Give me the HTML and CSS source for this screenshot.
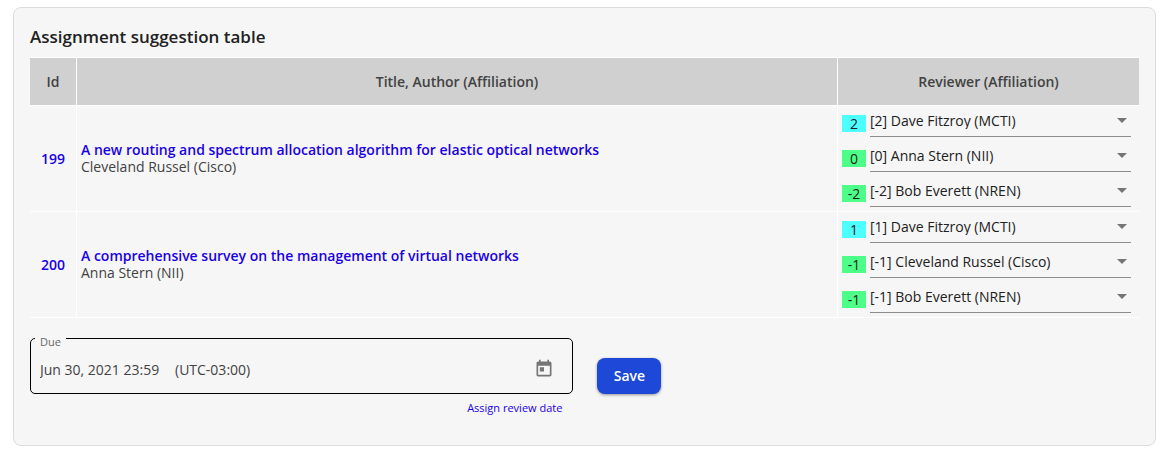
FILE: index.html
```html
<!DOCTYPE html>
<html lang="en">
<head>
<meta charset="utf-8">
<meta name="viewport" content="width=device-width, initial-scale=1">
<title>Assignment suggestion table</title>
<link rel="stylesheet" href="styles.css">
</head>
<body>
<main class="card">
  <h1 class="card-title">Assignment suggestion table</h1>
  <table class="suggestions">
    <thead>
      <tr>
        <th class="col-id" scope="col">Id</th>
        <th scope="col">Title, Author (Affiliation)</th>
        <th class="col-reviewer" scope="col">Reviewer (Affiliation)</th>
      </tr>
    </thead>
    <tbody>
      <tr>
        <td class="id-cell"><a class="link" href="#199">199</a></td>
        <td class="paper"><a class="link" href="#199">A new routing and spectrum allocation algorithm for elastic optical networks</a><div>Cleveland Russel (Cisco)</div></td>
        <td class="reviewers">
          <div class="reviewer"><span class="score score-high">2</span><span class="select-wrap"><select class="select" aria-label="Reviewer 1 of 199"><option>[2] Dave Fitzroy (MCTI)</option></select></span></div>
          <div class="reviewer"><span class="score score-low">0</span><span class="select-wrap"><select class="select" aria-label="Reviewer 2 of 199"><option>[0] Anna Stern (NII)</option></select></span></div>
          <div class="reviewer"><span class="score score-low">-2</span><span class="select-wrap"><select class="select" aria-label="Reviewer 3 of 199"><option>[-2] Bob Everett (NREN)</option></select></span></div>
        </td>
      </tr>
      <tr>
        <td class="id-cell"><a class="link" href="#200">200</a></td>
        <td class="paper"><a class="link" href="#200">A comprehensive survey on the management of virtual networks</a><div>Anna Stern (NII)</div></td>
        <td class="reviewers">
          <div class="reviewer"><span class="score score-high">1</span><span class="select-wrap"><select class="select" aria-label="Reviewer 1 of 200"><option>[1] Dave Fitzroy (MCTI)</option></select></span></div>
          <div class="reviewer"><span class="score score-low">-1</span><span class="select-wrap"><select class="select" aria-label="Reviewer 2 of 200"><option>[-1] Cleveland Russel (Cisco)</option></select></span></div>
          <div class="reviewer"><span class="score score-low">-1</span><span class="select-wrap"><select class="select" aria-label="Reviewer 3 of 200"><option>[-1] Bob Everett (NREN)</option></select></span></div>
        </td>
      </tr>
    </tbody>
  </table>
  <form class="due-form">
    <div class="due">
      <div class="field">
        <label class="field-label" for="due">Due</label>
        <div class="field-row">
          <input class="field-input" id="due" type="text" value="Jun 30, 2021 23:59">
          <span class="zone">(UTC-03:00)</span>
          <button class="calendar" type="button" aria-label="Open calendar">
            <svg width="20" height="20" viewBox="0 0 24 24" fill="currentColor" aria-hidden="true"><path d="M19 3h-1V1h-2v2H8V1H6v2H5c-1.11 0-1.99.9-1.99 2L3 19c0 1.1.89 2 2 2h14c1.1 0 2-.9 2-2V5c0-1.1-.9-2-2-2zm0 16H5V8h14v11zM7 10h5v5H7z"/></svg>
          </button>
        </div>
      </div>
      <a class="hint" href="#review-date">Assign review date</a>
    </div>
    <button class="save" type="button">Save</button>
  </form>
</main>
</body>
</html>
```

FILE: styles.css
```css
* {
  box-sizing: border-box;
}

body {
  margin: 7px 14px 0 13px;
  background: #fff;
  color: #424242;
  font: 14px/17px "Open Sans", "Noto Sans", sans-serif;
}

.card {
  padding: 17px 16px 29px;
  border: 1px solid #dcdcdc;
  border-radius: 8px;
  background: #f6f6f6;
}

.card-title {
  margin: 0 0 8px;
  color: #212121;
  font-size: 17px;
  font-weight: 600;
  line-height: 24px;
}

.suggestions {
  width: 100%;
  table-layout: fixed;
  border-spacing: 0;
}

.suggestions th,
.suggestions td {
  border-right: 1px solid #fff;
  border-bottom: 1px solid #fff;
}

.suggestions th:last-child,
.suggestions td:last-child {
  border-right: 0;
}

.suggestions th {
  height: 49px;
  padding: 0 4px;
  border-top: 1px solid #fff;
  background: #d0d0d0;
  font-weight: 600;
}

.suggestions .col-id {
  width: 47px;
}

.suggestions .col-reviewer {
  width: 301px;
}

.id-cell {
  padding: 0;
  text-align: center;
}

.paper {
  padding: 0 4px 2px;
}

.link {
  color: #1a00e8;
  font-weight: 600;
  text-decoration: none;
}

.reviewers {
  padding: 0 8px 0 4px;
}

.reviewer {
  display: flex;
  gap: 4px;
  height: 35px;
}

.score {
  flex: none;
  width: 24px;
  height: 17px;
  margin-top: 9px;
  color: #212121;
  text-align: center;
}

.score-high {
  background: #4dffff;
}

.score-low {
  background: #4dff88;
}

.select-wrap {
  position: relative;
  flex: 1;
  height: 31px;
}

.select-wrap::after {
  position: absolute;
  top: 12px;
  right: 4px;
  border: 5px solid transparent;
  border-top-color: #757575;
  border-bottom: 0;
  content: "";
  pointer-events: none;
}

.select {
  width: 100%;
  height: 31px;
  padding: 0 20px 2px 0;
  border: 0;
  border-bottom: 1px solid #8c8c8c;
  border-radius: 0;
  appearance: none;
  background: transparent;
  color: #212121;
  font: inherit;
}

.due-form {
  display: flex;
  align-items: flex-start;
  gap: 24px;
  margin-top: 20px;
}

.due {
  display: flex;
  flex-direction: column;
  width: 49%;
}

.field {
  height: 56px;
  padding-left: 4px;
  border: 1px solid #000;
  border-radius: 5px;
}

.field-label {
  display: block;
  width: 31px;
  height: 10px;
  margin-top: -1px;
  padding-left: 5px;
  background: #f6f6f6;
  color: #666;
  font-size: 11px;
  line-height: 8px;
}

.field-row {
  display: flex;
  align-items: center;
  height: 42px;
  padding: 0 18px 0 5px;
}

.field-input {
  width: 135px;
  padding: 0;
  border: 0;
  background: transparent;
  color: #424242;
  font: inherit;
}

.calendar {
  display: flex;
  margin-left: auto;
  padding: 0;
  border: 0;
  background: transparent;
  color: #757575;
}

.hint {
  align-self: flex-end;
  margin: 5px 11px 0 0;
  color: #1a00e8;
  font-size: 11px;
  line-height: 17px;
  text-decoration: none;
}

.save {
  min-width: 64px;
  height: 36px;
  margin-top: 20px;
  padding: 0 15px 2px;
  border: 0;
  border-radius: 8px;
  background: #1d48d8;
  box-shadow: 0 1px 3px rgb(0 0 0 / 40%);
  color: #fff;
  font: inherit;
  font-weight: 600;
}
```
